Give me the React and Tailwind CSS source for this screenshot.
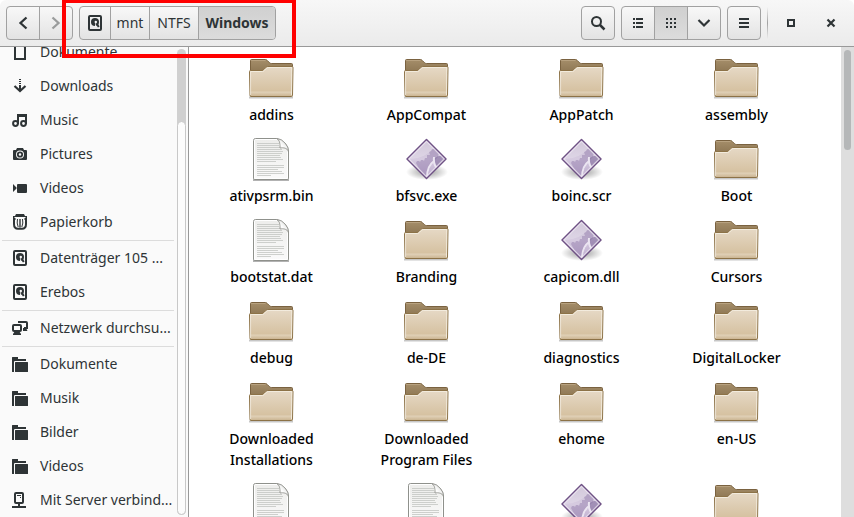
import React from 'react';

const DriveIcon = () => (
    <svg width="16" height="16" viewBox="0 0 16 16" aria-hidden="true">
        <rect x="2" y="1" width="12" height="14" rx="1" fill="none" stroke="#2e3436" strokeWidth="2" />
        <circle cx="8" cy="7" r="4" fill="#2e3436" />
        <path d="M9 8l-.5 4" stroke="#f6f6f6" strokeWidth="1.300" />
        <circle cx="8.800" cy="7" r="1.200" fill="#f6f6f6" />
        <path d="M9.400 8.400l2.400 3.600" stroke="#2e3436" strokeWidth="2" />
    </svg>
);

const DocumentsIcon = () => (
    <svg width="16" height="16" viewBox="0 0 16 16" aria-hidden="true">
        <path fill="none" stroke="#2e3436" strokeWidth="2" d="M3 1h8l2 2v12H3z" />
    </svg>
);

const DownloadsIcon = () => (
    <svg width="16" height="16" viewBox="0 0 16 16" aria-hidden="true">
        <path fill="#2e3436" d="M7 1h2v1H7zM7 3h2v1H7zM7 5h2v1H7zM7 7h2v5H7z" />
        <path fill="none" stroke="#2e3436" strokeWidth="2.200" d="M2.500 8L8 13l5.500-5" />
    </svg>
);

const MusicIcon = () => (
    <svg width="16" height="16" viewBox="0 0 16 16" aria-hidden="true">
        <g fill="none" stroke="#2e3436" strokeWidth="2">
            <circle cx="3.500" cy="11.500" r="2.400" />
            <circle cx="11.500" cy="11.500" r="2.400" />
            <path d="M6 12V3h8v9M6 4h8" />
        </g>
    </svg>
);

const CameraIcon = () => (
    <svg width="16" height="16" viewBox="0 0 16 16" aria-hidden="true">
        <path fillRule="evenodd" fill="#2e3436" d="M5 2h6l1 2h2a1 1 0 0 1 1 1v8a1 1 0 0 1-1 1H2a1 1 0 0 1-1-1V5a1 1 0 0 1 1-1h2zM8 4.500a4 4 0 1 0 0 8 4 4 0 0 0 0-8z" />
        <circle cx="8" cy="8.500" r="2.200" fill="none" stroke="#2e3436" strokeWidth="1.800" />
    </svg>
);

const VideoIcon = () => (
    <svg width="16" height="16" viewBox="0 0 16 16" aria-hidden="true">
        <path fill="#2e3436" d="M1 4l3.500 3.500v1L1 12zM6 4h8a1 1 0 0 1 1 1v7a1 1 0 0 1-1 1H6a1 1 0 0 1-1-1V5a1 1 0 0 1 1-1z" />
    </svg>
);

const TrashIcon = () => (
    <svg width="16" height="16" viewBox="0 0 16 16" aria-hidden="true">
        <path fill="#2e3436" d="M4 0h8l1 2h2v2h-1.500V3h-11v1H1V2h2z" />
        <g fill="none" stroke="#2e3436">
            <path strokeWidth="2" d="M3.500 5H2v5q0 4.800 4 4.800h4q4 0 4-4.800V5h-1.500" />
            <path d="M5.500 5q-1 4 .7 8M10.500 5q1 4-.7 8" />
            <path d="M8 5v8.500" strokeWidth="1.400" />
        </g>
    </svg>
);

const NetworkIcon = () => (
    <svg width="16" height="16" viewBox="0 0 16 16" aria-hidden="true">
        <g fill="none" stroke="#2e3436" strokeWidth="2">
            <path d="M7 3V2h7q1 0 1 1v5h-3" />
            <rect x="1" y="5" width="8" height="6" rx="1" />
        </g>
        <path fill="#2e3436" d="M11 8h3l1.500 3H11zM3 11h4l2 3v1H1v-1z" />
    </svg>
);

const FolderSymbol = () => (
    <svg width="16" height="16" viewBox="0 0 16 16" aria-hidden="true">
        <path fill="#2e3436" d="M0 1.500A.5.500 0 0 1 .5 1H6v2h8v2H3a1 1 0 0 0-1 1v10H.5a.5.500 0 0 1-.5-.5zM3.500 6H15.500a.5.500 0 0 1 .5.500v9a.5.500 0 0 1-.5.500h-12a.5.500 0 0 1-.5-.5v-9a.5.500 0 0 1 .5-.5z" />
    </svg>
);

const ServerIcon = () => (
    <svg width="16" height="16" viewBox="0 0 16 16" aria-hidden="true">
        <rect x="3" y="1" width="8" height="10" rx="1" fill="none" stroke="#2e3436" strokeWidth="2" />
        <path fill="#2e3436" d="M5 3h4v1H5zM8 5h1v1H8zM6 11h2v3H6zM0 14h14v2H0z" />
    </svg>
);

const FolderIcon = () => (
    <svg width="49" height="48" viewBox="0 0 49 48" aria-hidden="true">
        <defs>
            <linearGradient id="folderFront" x1="0" y1="0" x2="0" y2="1">
                <stop offset="0" stopColor="#e6d9c6" />
                <stop offset=".8" stopColor="#d6c2a2" />
                <stop offset=".86" stopColor="#dfcfb5" />
                <stop offset="1" stopColor="#c9b28e" />
            </linearGradient>
            <linearGradient id="folderBack" x1="0" y1="0" x2="0" y2="1">
                <stop offset="0" stopColor="#a58e6a" />
                <stop offset="1" stopColor="#8a7350" />
            </linearGradient>
        </defs>
        <path d="M2 43.500h44" stroke="#000" strokeOpacity=".22" strokeWidth="2" />
        <path d="M3.500 20V6.500q0-1 1-1H18.500q1 0 1.800 1l2 2q1 1 2 1H44.500q1 0 1 1V20z" fill="url(#folderBack)" stroke="#7a6240" />
        <path d="M4.500 7V6.500H18.500" stroke="#c0ab8a" strokeOpacity=".7" fill="none" />
        <path d="M2.500 17.500q0-1 1-1H15q1 0 1.800-1l2-2q1-1 2-1H45q1 0 1 1L45.500 41.500q0 1-1 1H4q-1 0-1-1z" fill="url(#folderFront)" stroke="#8c7247" />
        <path d="M3.600 41V17.500H15.500q1 0 1.800-1l2-2q1-1 2-1H44.800L44.500 41" stroke="#f5eee2" strokeOpacity=".85" fill="none" />
    </svg>
);

const DocIcon = () => (
    <svg width="49" height="48" viewBox="0 0 49 48" aria-hidden="true">
        <defs>
            <linearGradient id="paper" x1="0" y1="0" x2="0" y2="1">
                <stop offset="0" stopColor="#ededeb" />
                <stop offset="1" stopColor="#fafafa" />
            </linearGradient>
            <linearGradient id="curl" x1="0" y1="1" x2="1" y2="0">
                <stop offset="0" stopColor="#b4b6b1" />
                <stop offset=".4" stopColor="#ffffff" />
                <stop offset="1" stopColor="#d0d1ce" />
            </linearGradient>
        </defs>
        <path d="M6 45h36" stroke="#000" strokeOpacity=".3" strokeWidth="2" />
        <path d="M6.500 5.500q0-2 2-2H29q5 0 9 4.500 3.500 4 3.500 8V43q0 1.500-1.500 1.500H8q-1.500 0-1.500-1.500z" fill="url(#paper)" stroke="#8f918c" />
        <path d="M40.500 17V43.500H7.500V5.500q0-1 1-1H30" stroke="#fff" fill="none" />
        <path d="M10 8.500h22M10 10.500h22M10 12.500h23M10 14.500h25M10 16.500h26M10 18.500h25M10 20.500h23M10 22.500h24M10 24.500h26M10 26.500h19M10 30.500h27M10 32.500h27M10 34.500h21M10 36.500h25M10 38.500h27M10 40.500h14" stroke="#c3c5c1" strokeWidth=".8" />
        <path d="M30 3.600q3.500 2 3 9.400 6-1.200 8.500 3 0-4-3.500-8-3.500-4-8-4.400z" fill="url(#curl)" stroke="#8f918c" strokeWidth=".8" />
    </svg>
);

const ExeIcon = () => (
    <svg width="49" height="48" viewBox="0 0 49 48" aria-hidden="true">
        <defs>
            <linearGradient id="gem" x1="0" y1="0" x2="0" y2="1">
                <stop offset="0" stopColor="#c6bad0" />
                <stop offset=".5" stopColor="#d6cbe0" />
                <stop offset="1" stopColor="#bcaacd" />
            </linearGradient>
            <radialGradient id="gemShadow">
                <stop offset="0" stopColor="#000" stopOpacity=".4" />
                <stop offset="1" stopColor="#000" stopOpacity="0" />
            </radialGradient>
            <clipPath id="gemClip">
                <path d="M24.500 6l18 18-18 18-18-18z" />
            </clipPath>
        </defs>
        <ellipse cx="25" cy="37" rx="21" ry="8" fill="url(#gemShadow)" />
        <path d="M24.500 4.500L44 24 24.500 43.500 5 24z" fill="url(#gem)" stroke="#6f5285" strokeWidth="1.500" strokeLinejoin="round" />
        <g clipPath="url(#gemClip)">
            <path d="M14 28l1-2h2l1 1 1-2h2l1 1 1-3h2l0-3h3l-1-3 2-1 1-2h3l1 1 3 2-1 5-4 4-3 4-2 5-1 7-3 2z" fill="#957fae" fillOpacity=".5" />
            <path d="M33 23q4-3 8-2l4 3-9 9q-4-4-3-10z" fill="#86709f" fillOpacity=".65" />
            <path d="M25 43q0-12 7-17M32 22q-1 10 5 12" stroke="#ebe5f1" strokeWidth="2" fill="none" />
            <path d="M8 24q14 0 24-11l-8-8z" fill="#fff" fillOpacity=".2" />
        </g>
        <path d="M24.500 6.400L42.100 24 24.500 41.600 6.900 24z" fill="none" stroke="#f2edf6" strokeWidth="1.100" strokeOpacity=".7" />
    </svg>
);

const places = [
    [
        { label: 'Dokumente', icon: DocumentsIcon },
        { label: 'Downloads', icon: DownloadsIcon },
        { label: 'Music', icon: MusicIcon },
        { label: 'Pictures', icon: CameraIcon },
        { label: 'Videos', icon: VideoIcon },
        { label: 'Papierkorb', icon: TrashIcon },
    ],
    [
        { label: 'Datenträger 105 ...', icon: DriveIcon },
        { label: 'Erebos', icon: DriveIcon },
    ],
    [{ label: 'Netzwerk durchsu...', icon: NetworkIcon }],
    [
        { label: 'Dokumente', icon: FolderSymbol },
        { label: 'Musik', icon: FolderSymbol },
        { label: 'Bilder', icon: FolderSymbol },
        { label: 'Videos', icon: FolderSymbol },
        { label: 'Mit Server verbind...', icon: ServerIcon },
    ],
];

const files = [
    ['addins', FolderIcon],
    ['AppCompat', FolderIcon],
    ['AppPatch', FolderIcon],
    ['assembly', FolderIcon],
    ['ativpsrm.bin', DocIcon],
    ['bfsvc.exe', ExeIcon],
    ['boinc.scr', ExeIcon],
    ['Boot', FolderIcon],
    ['bootstat.dat', DocIcon],
    ['Branding', FolderIcon],
    ['capicom.dll', ExeIcon],
    ['Cursors', FolderIcon],
    ['debug', FolderIcon],
    ['de-DE', FolderIcon],
    ['diagnostics', FolderIcon],
    ['DigitalLocker', FolderIcon],
    ['Downloaded Installations', FolderIcon],
    ['Downloaded Program Files', FolderIcon],
    ['ehome', FolderIcon],
    ['en-US', FolderIcon],
    ['', DocIcon],
    ['', DocIcon],
    ['', ExeIcon],
    ['', FolderIcon],
];

const group = 'flex h-[34px] rounded-[4px] border border-[#a1a1a1] bg-linear-to-b from-[#f8f8f8] to-[#e3e3e3] divide-x divide-[#a1a1a1] overflow-hidden';
const cell = 'flex items-center justify-center h-full';
const active = 'bg-linear-to-b from-[#d0d0d0] to-[#dcdcdc]';

const Header = () => (
    <header className="flex shrink-0 items-center gap-[6px] h-[47px] px-[6px] border-b border-[#999999] rounded-t-md bg-linear-to-b from-[#f7f7f7] to-[#ebebeb]">
        <div className={`${group} w-[67px]`}>
            <button aria-label="Zurück" className={`${cell} flex-1`}>
                <svg width="16" height="16" viewBox="0 0 16 16"><path d="M11.500 2.500L5.500 8l6 5.500" fill="none" stroke="#2e3436" strokeWidth="2.300" /></svg>
            </button>
            <button aria-label="Vor" className={`${cell} flex-1`}>
                <svg width="16" height="16" viewBox="0 0 16 16"><path d="M4.500 2.500l6 5.500-6 5.500" fill="none" stroke="#9a9c9c" strokeWidth="2.300" /></svg>
            </button>
        </div>
        <nav className={group}>
            <button aria-label="Datenträger" className={`${cell} w-[31px]`}><DriveIcon /></button>
            <button className={`${cell} w-[39px]`}>mnt</button>
            <button className={`${cell} w-[49px]`}>NTFS</button>
            <button className={`${cell} ${active} w-[76px] font-bold`}>Windows</button>
        </nav>
        <div className="flex items-center gap-[6px] ml-auto">
            <button aria-label="Suchen" className={`${group} w-[34px] items-center justify-center`}>
                <svg width="16" height="16" viewBox="0 0 16 16"><circle cx="6.500" cy="6.500" r="4.500" fill="none" stroke="#2e3436" strokeWidth="2" /><path d="M10 10l4.500 4.500" stroke="#2e3436" strokeWidth="2.500" /></svg>
            </button>
            <div className={`${group} w-[100px]`}>
                <button aria-label="Liste" className={`${cell} flex-1`}>
                    <svg width="16" height="16" viewBox="0 0 16 16"><path fill="#2e3436" d="M3 3h2v2H3zM6 3h7v2H6zM3 7h2v2H3zM6 7h7v2H6zM3 11h2v2H3zM6 11h7v2H6z" /></svg>
                </button>
                <button aria-label="Symbole" className={`${cell} ${active} flex-1`}>
                    <svg width="16" height="16" viewBox="0 0 16 16"><path fill="#2e3436" d="M3 3h2v2H3zM7 3h2v2H7zM11 3h2v2h-2zM3 7h2v2H3zM7 7h2v2H7zM11 7h2v2h-2zM3 11h2v2H3zM7 11h2v2H7zM11 11h2v2h-2z" /></svg>
                </button>
                <button aria-label="Ansicht" className={`${cell} flex-1`}>
                    <svg width="16" height="16" viewBox="0 0 16 16"><path d="M2.500 5L8 10.500 13.500 5" fill="none" stroke="#2e3436" strokeWidth="2.200" /></svg>
                </button>
            </div>
            <button aria-label="Menü" className={`${group} w-[34px] items-center justify-center`}>
                <svg width="16" height="16" viewBox="0 0 16 16"><path fill="#2e3436" d="M3 3h10v2H3zM3 7h10v2H3zM3 11h10v2H3z" /></svg>
            </button>
            <div className="w-px h-8 bg-linear-to-b from-transparent via-[#a1a1a1] to-transparent" />
            <button aria-label="Maximieren" className={`${cell} w-[34px]`}>
                <svg width="16" height="16" viewBox="0 0 16 16"><path d="M5 5h6v6H5z" fill="none" stroke="#2e3436" strokeWidth="2" /></svg>
            </button>
            <button aria-label="Schließen" className={`${cell} w-[34px]`}>
                <svg width="16" height="16" viewBox="0 0 16 16"><path d="M4.500 4.500l7 7M11.500 4.500l-7 7" stroke="#2e3436" strokeWidth="2.200" /></svg>
            </button>
        </div>
    </header>
);

const Sidebar = () => (
    <aside className="flex shrink-0 w-[189px] border-r border-[#999999] bg-[#fafafa]">
        <nav className="flex-1 min-w-0 overflow-hidden">
            <div className="-mt-3">
                {places.map((section, i) => (
                    <ul key={i} className={i > 0 ? 'ml-[2px] mr-[3px] mt-px border-t border-[#dcdcdc]' : 'ml-[2px] mr-[3px]'}>
                        {section.map(({ label, icon: Icon }) => (
                            <li key={label}>
                                <a href="#" className="flex items-center gap-3 h-[34px] pl-[10px] whitespace-nowrap">
                                    <Icon />
                                    {label}
                                </a>
                            </li>
                        ))}
                    </ul>
                ))}
            </div>
        </nav>
        <div className="flex flex-col w-[9px] my-[2px] mr-[2px] rounded-full bg-[#d0d0d0]">
            <div className="mt-[72px] flex-1 rounded-full border border-[#c8c8c8] bg-[#fcfcfc]" />
        </div>
    </aside>
);

const App = () => {
    return (
        <div className="relative flex flex-col h-screen overflow-hidden bg-white text-sm text-[#2e3436] font-['Noto_Sans','Open_Sans',sans-serif]">
            <Header />
            <div className="flex flex-1 min-h-0">
                <Sidebar />
                <main className="flex-1 min-w-0 overflow-hidden pl-[5px] pt-[7px]">
                    <div className="grid grid-cols-[repeat(auto-fill,155px)] gap-y-[10px]">
                        {files.map(([name, Icon], i) => (
                            <div key={i} className="flex flex-col items-center gap-[2px]">
                                <Icon />
                                <span className="max-w-[110px] text-center leading-[21px] font-medium text-black">{name}</span>
                            </div>
                        ))}
                    </div>
                </main>
                <div className="w-[13px] shrink-0 bg-[#dedede] px-[3px] pt-[3px]">
                    <div className="h-[100px] rounded-full bg-[#b5b7b8]" />
                </div>
            </div>
            {/* highlight around the path bar */}
            <div className="absolute left-[62px] -top-px w-[234px] h-[59px] border-4 border-[#ff0000] pointer-events-none" />
        </div>
    );
};

export default App;
